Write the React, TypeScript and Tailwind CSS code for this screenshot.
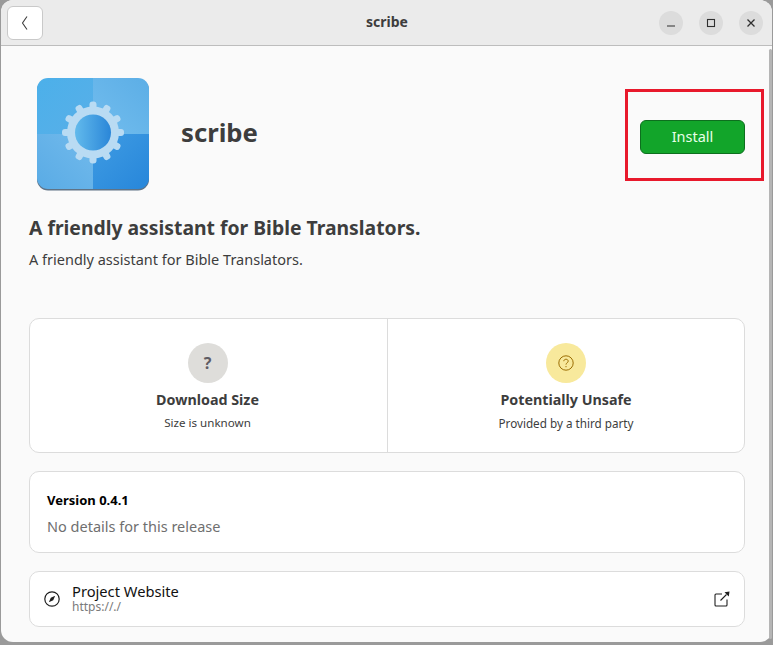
import React from "react";

const teeth = Array.from({ length: 12 }, (_, i) => i * 30);

function AppIcon() {
  return (
    <svg width="114" height="114" viewBox="0 0 114 114" className="shrink-0">
      <defs>
        <linearGradient id="tl" x1="0" y1="0" x2="1" y2="1">
          <stop offset="0" stopColor="#4cb0ea" />
          <stop offset="1" stopColor="#58afe8" />
        </linearGradient>
        <linearGradient id="tr" x1="1" y1="0" x2="0" y2="1">
          <stop offset="0" stopColor="#5caee6" />
          <stop offset="1" stopColor="#72bdee" />
        </linearGradient>
        <linearGradient id="bl" x1="0" y1="1" x2="1" y2="0">
          <stop offset="0" stopColor="#59abe5" />
          <stop offset="1" stopColor="#72baec" />
        </linearGradient>
        <linearGradient id="br" x1="1" y1="1" x2="0" y2="0">
          <stop offset="0" stopColor="#2786da" />
          <stop offset="1" stopColor="#3f9ce3" />
        </linearGradient>
        <linearGradient id="hub" x1="0" y1="0" x2="1" y2="0">
          <stop offset="0" stopColor="#62baec" />
          <stop offset="1" stopColor="#2a86d8" />
        </linearGradient>
        <clipPath id="rr">
          <rect x="1" y="1" width="112" height="111" rx="11" />
        </clipPath>
      </defs>
      <rect x="1" y="2" width="112" height="111.5" rx="11" fill="#5f7386" />
      <g clipPath="url(#rr)">
        <rect x="1" y="1" width="56" height="56" fill="url(#tl)" />
        <rect x="57" y="1" width="56" height="56" fill="url(#tr)" />
        <rect x="1" y="57" width="56" height="56" fill="url(#bl)" />
        <rect x="57" y="57" width="56" height="56" fill="url(#br)" />
      </g>
      <g transform="translate(57 55.5)" fill="#b9dbf3">
        <circle r="26" />
        {teeth.map((a) => (
          <rect key={a} x="-3.5" y="-31" width="7" height="10" rx="3" transform={`rotate(${a})`} />
        ))}
        <circle r="18" fill="url(#hub)" />
      </g>
    </svg>
  );
}

function WinButton({ children }: { children: React.ReactNode }) {
  return (
    <div className="w-[24px] h-[24px] rounded-full bg-[#dcdcdc] flex items-center justify-center">
      {children}
    </div>
  );
}

export default function App() {
  return (
    <div className="relative w-[773px] h-[645px] overflow-hidden bg-[#9a9a9a] font-['Noto_Sans',sans-serif] text-[#3d3d3d]">
      <div className="ml-px w-[771px] h-[642px] rounded-[12px] overflow-hidden bg-[#fafafa] flex flex-col">
        <header className="h-[46px] shrink-0 bg-[#ebebeb] border-b border-[#bdbdbd] grid grid-cols-[1fr_auto_1fr] items-center pl-[6px] pr-[9px]">
          <button className="w-[36px] h-[34px] rounded-[6px] bg-white border border-[#c9c9c9] flex items-center justify-center">
            <svg width="10" height="16" viewBox="0 0 10 16" fill="none" stroke="#3d3d3d" strokeWidth="1.1">
              <path d="M7 1.5 L2.5 8 L7 14.5" />
            </svg>
          </button>
          <div className="text-center text-[14px] font-bold pb-[2px] pl-[4px] text-[#3d3d3d]">scribe</div>
          <div className="flex items-center justify-end gap-[16px]">
            <WinButton>
              <svg width="10" height="10" viewBox="0 0 10 10" stroke="#2e2e2e" strokeWidth="1.1">
                <path d="M1 8 H9" />
              </svg>
            </WinButton>
            <WinButton>
              <svg width="10" height="10" viewBox="0 0 10 10" fill="none" stroke="#2e2e2e" strokeWidth="1.1">
                <rect x="1.5" y="1.5" width="7" height="7" />
              </svg>
            </WinButton>
            <WinButton>
              <svg width="10" height="10" viewBox="0 0 10 10" stroke="#2e2e2e" strokeWidth="1.3">
                <path d="M1.5 1.5 L8.5 8.5 M8.5 1.5 L1.5 8.5" />
              </svg>
            </WinButton>
          </div>
        </header>

        <main className="flex-1 pl-[28px] pr-[27px] pt-[31px] flex flex-col">
          <section className="flex items-center h-[114px] pl-[7px]">
            <AppIcon />
            <h1 className="ml-[31px] text-[25.7px] font-bold leading-none text-[#3d3d3d] flex-1 pb-[2px]">scribe</h1>
            <button className="w-[105px] h-[34px] rounded-[6px] bg-[#12a52a] border border-[#0d6f1e] text-[#e8ffe8] text-[14.5px] mt-[6px]">
              Install
            </button>
          </section>

          <h2 className="mt-[24px] text-[19.35px] leading-[26px] font-bold text-[#3d3d3d]">
            A friendly assistant for Bible Translators.
          </h2>
          <p className="mt-[8px] text-[14.5px] leading-[20px] text-[#3d3d3d]">A friendly assistant for Bible Translators.</p>

          <section className="mt-[49px] h-[135px] rounded-[10px] bg-white border border-[#dcdcdc] grid grid-cols-[358px_1fr]">
            <div className="flex flex-col items-center pt-[24px] pr-[2px] border-r border-[#dcdcdc]">
              <div className="w-[40px] h-[40px] rounded-full bg-[#deddda] flex items-center justify-center text-[16px] font-bold text-[#5e5c64]">
                ?
              </div>
              <div className="mt-[5px] text-[14.3px] leading-[24px] font-bold">Download Size</div>
              <div className="mt-[1px] text-[11.6px] leading-[20px]">Size is unknown</div>
            </div>
            <div className="flex flex-col items-center pt-[24px]">
              <div className="w-[40px] h-[40px] rounded-full bg-[#f8e99c] flex items-center justify-center">
                <svg width="16" height="16" viewBox="0 0 16 16" fill="none" stroke="#9c6e03" strokeWidth="1">
                  <circle cx="8" cy="8" r="7.2" />
                  <path d="M5.8 6.2 C5.8 3.6 10.2 3.6 10.2 6.2 C10.2 7.8 8 7.8 8 9.6" />
                  <path d="M8 11 V12.2" />
                </svg>
              </div>
              <div className="mt-[5px] text-[14.3px] leading-[24px] font-bold">Potentially Unsafe</div>
              <div className="mt-[1px] text-[11.7px] leading-[20px]">Provided by a third party</div>
            </div>
          </section>

          <section className="mt-[18px] h-[82px] rounded-[10px] bg-white border border-[#dcdcdc] px-[17px] pt-[17px]">
            <div className="text-[13px] leading-[22px] font-bold text-black">Version 0.4.1</div>
            <div className="mt-[4px] text-[14.5px] leading-[22px] text-[#6f6f6f]">No details for this release</div>
          </section>

          <section className="mt-[18px] h-[56px] rounded-[10px] bg-white border border-[#dcdcdc] flex items-center pl-[14px] pr-[14px]">
            <svg width="16" height="16" viewBox="0 0 16 16" fill="none" stroke="#1f1f1f" strokeWidth="1.2" className="shrink-0">
              <circle cx="8" cy="8" r="7.2" />
              <path d="M11.2 4.8 L9.2 9.2 L4.8 11.2 L6.8 6.8 Z" fill="#1f1f1f" stroke="none" />
            </svg>
            <div className="ml-[12px] flex-1 flex flex-col">
              <span className="text-[14.7px] leading-[16px] text-[#111]">Project Website</span>
              <span className="text-[12px] leading-[16px] text-[#7a7a7a]">https://./</span>
            </div>
            <svg width="16" height="16" viewBox="0 0 16 16" fill="none" stroke="#1f1f1f" strokeWidth="1.1" className="shrink-0">
              <path d="M8 3 H2 a1 1 0 0 0 -1 1 V14 a1 1 0 0 0 1 1 H12 a1 1 0 0 0 1 -1 V8.5" />
              <path d="M6.5 9.5 L12.5 3.5" />
              <path d="M10.5 1.2 L15.5 0.5 L14.8 5.5 Z" fill="#1f1f1f" stroke="none" />
            </svg>
          </section>
        </main>
      </div>

      {/* scrollbar overlay */}
      <div className="absolute right-[1px] top-[49px] bottom-[6px] w-[3px] rounded-full bg-[#b5b5b5]" />
      {/* red annotation rectangle */}
      <div className="absolute left-[625px] top-[89px] w-[139px] h-[92px] border-[3px] border-[#e8192c]" />
    </div>
  );
}
